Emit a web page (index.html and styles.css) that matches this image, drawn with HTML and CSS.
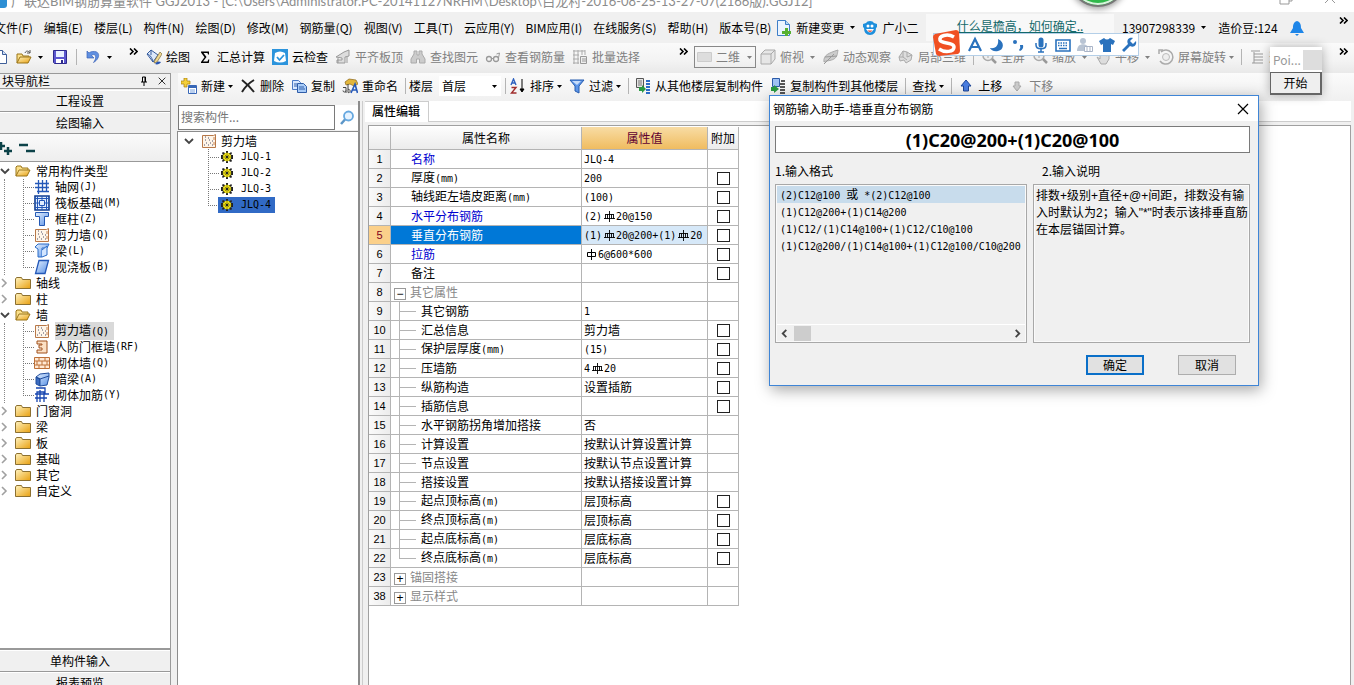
FILE: index.html
```html
<!DOCTYPE html>
<html lang="zh-CN">
<head>
<meta charset="utf-8">
<title>广联达BIM钢筋算量软件 GGJ2013</title>
<link rel="stylesheet" href="styles.css">
</head>
<body>
<svg class="defs" aria-hidden="true">
  <defs>
    <linearGradient id="gold" x1="0" y1="0" x2="1" y2="1"><stop offset="0" stop-color="#fff3c0"/><stop offset="1" stop-color="#e8a010"/></linearGradient>
    <linearGradient id="sky" x1="0" y1="0" x2="1" y2="1"><stop offset="0" stop-color="#e4f0ff"/><stop offset="1" stop-color="#5a92e6"/></linearGradient>
  </defs>
  <symbol id="arrow" viewBox="0 0 5 3"><path d="M0 0h5L2.500 3z" fill="currentColor"/></symbol>
  <symbol id="more" viewBox="0 0 9 7"><path d="M1 0.500l3 3-3 3M5 0.500l3 3-3 3" fill="none" stroke="#000" stroke-width="1.600"/></symbol>
  <symbol id="open" viewBox="0 0 16 16"><path d="M1 13V4l1-1h4l1 2h6v3" fill="#fbe08a" stroke="#9a7418"/><path d="M1 13l3-6h11l-3 6z" fill="url(#gold)" stroke="#9a7418"/></symbol>
  <symbol id="openbig" viewBox="0 0 16 16"><path d="M1 14V5h5l1 2h6v3" fill="#fbe08a" stroke="#9a7418"/><path d="M1 14l3-6h11l-3 6z" fill="url(#gold)" stroke="#9a7418"/><path d="M9 4c1-3 4-2 5 0M14 1v3h-3" fill="none" stroke="#555"/></symbol>
  <symbol id="folder" viewBox="0 0 16 16"><path d="M.5 13.500V4l1-1.500h5l1 2h8v9z" fill="url(#gold)" stroke="#8c7030"/></symbol>
  <symbol id="doc" viewBox="0 0 16 16"><path d="M2.500 1.500h8l4 4v9h-12z" fill="#fff" stroke="#3f5f99"/><path d="M10.500 1.500v4h4" fill="#cfe0f8" stroke="#3f5f99"/></symbol>
  <symbol id="save" viewBox="0 0 16 16"><path d="M1.500 1.500h13v13h-12l-1-1z" fill="#5b57cf" stroke="#2e2a8c"/><path d="M4 2h8v6H4z" fill="#e8f0ff"/><path d="M4 10h8v4H4z" fill="#fff"/><path d="M9 11h2v3H9z" fill="#2e2a8c"/></symbol>
  <symbol id="undo" viewBox="0 0 16 16"><path d="M2 2v7h7L6.500 6.500c4-3 6 2 2 7 7-4 7-12-1-11-2 .3-3 1-3.500 1.500z" fill="#5f8fe0" stroke="#3a62b8" stroke-width=".7"/></symbol>
  <symbol id="paint" viewBox="0 0 16 16"><path d="M1 5l4-4 7 5-5 7z" fill="#dce8fa" stroke="#345a9c"/><path d="M1 5c2 0 5 3 6 8M5 1v5" fill="none" stroke="#345a9c"/><path d="M14 3l-5 8-1 3 3-1 5-8z" fill="#f0d890" stroke="#7b6a3a" stroke-width=".7"/><path d="M9 15c2-3 4-3 6-2-1 2-4 3-6 2z" fill="#2855b0"/></symbol>
  <symbol id="sigma" viewBox="0 0 16 16"><path d="M4 2.500h8v3h-1l-.5-1.500H6.500L9.500 8l-3.500 4.500h4.500l.8-2h1l-.5 3.500H4v-1L7.500 8.200 4 3.500z" fill="#000"/></symbol>
  <symbol id="check" viewBox="0 0 16 16"><path d="M0 0h16v16H0z" fill="#2c94dc"/><path d="M3 4q5-3 10 0l1 8q-6 3-12 0z" fill="#fff"/><path d="M5 8l2.500 3L12 6" fill="none" stroke="#2c94dc" stroke-width="1.800"/></symbol>
  <symbol id="slab" viewBox="0 0 16 16"><path d="M1 8l8-5 5-2v6l-4 1v6H2v-3h5V9z" fill="#ddd" stroke="#999"/><path d="M3 9v5M12 8v6" stroke="#999"/></symbol>
  <symbol id="binoc" viewBox="0 0 16 16"><path d="M4 2h3v4h2V2h3v3l3 5v4H9.500v-4h-3v4H1v-4l3-5z" fill="#ccc" stroke="#aaa"/></symbol>
  <symbol id="glasses" viewBox="0 0 16 16"><circle cx="4" cy="10" r="2.500" fill="none" stroke="#999" stroke-width="1.300"/><circle cx="11" cy="10" r="2.500" fill="none" stroke="#999" stroke-width="1.300"/><path d="M6.500 9.500h2M13.500 9l1-5-3 1" fill="none" stroke="#999"/></symbol>
  <symbol id="batch" viewBox="0 0 16 16"><path d="M1 2h12M1 6h6M1 10h6M1 14h6M2 1v14M6 1v14M10 1v5M13 1v5" stroke="#aaa"/><path d="M8.500 7.500h6v7h-6zM10 10h4M10 12h4" fill="#eee" stroke="#999"/></symbol>
  <symbol id="rect" viewBox="0 0 16 16"><path d="M.5 3.500h14v9H.5z" fill="#ddd" stroke="#ccc"/></symbol>
  <symbol id="cube" viewBox="0 0 16 16"><path d="M1 5l4-4h10v9l-4 5H1z" fill="#e6e6e6" stroke="#aaa"/><path d="M1 5h10v10M11 5l4-4" fill="none" stroke="#aaa"/></symbol>
  <symbol id="leaf" viewBox="0 0 16 16"><path d="M1 13C0 6 6 4 15 1c-1 5 0 10-12 11z" fill="#ccc" stroke="#aaa"/><path d="M1 15L11 5M2 8l12-1" stroke="#999"/></symbol>
  <symbol id="blocks" viewBox="0 0 16 16"><path d="M1 8l4-6 4 1 5 3-1 5-5 3-2-3-4 1z" fill="#ddd" stroke="#aaa"/><path d="M5 2v6l4 3M9 3v5l5-2M1 8l4 0" fill="none" stroke="#aaa"/></symbol>
  <symbol id="mag" viewBox="0 0 16 16"><circle cx="7" cy="6.500" r="5" fill="#eee" stroke="#aaa" stroke-width="1.500"/><path d="M11 10l4 4" stroke="#999" stroke-width="2.500"/><path d="M7 4v5M4.500 6.500h5" stroke="#aaa"/></symbol>
  <symbol id="hand" viewBox="0 0 16 16"><path d="M2 8l3 2V4l2-1 1 4 1-5h2v5l3-2v5l-3 5H6z" fill="#ddd" stroke="#aaa"/></symbol>
  <symbol id="rotate" viewBox="0 0 16 16"><path d="M1 5V1h4M3 3a7 7 0 1 1-1 9" fill="none" stroke="#aaa" stroke-width="1.500"/><circle cx="8" cy="8" r="3.500" fill="#eee" stroke="#bbb"/></symbol>
  <symbol id="list" viewBox="0 0 16 16"><path d="M2 2h9M5 5h9M5 8h9M5 11h9M3 14h11M5 3v11" stroke="#999"/></symbol>
  <symbol id="new" viewBox="0 0 16 16"><path d="M3 0h3v3h3v3H6v3H3V6H0V3h3z" fill="#f4cf3a" stroke="#a67c0c" stroke-width=".7"/><path d="M7.500 7.500h8v8h-8z" fill="#fff" stroke="#3867b7"/><path d="M8 8h7v2H8z" fill="#3867b7"/><path d="M9 12h5M9 14h5" stroke="#79a2df"/></symbol>
  <symbol id="del" viewBox="0 0 16 16"><path d="M2 2c4 3 8 7 12 12M14 2C9 5 5 9 2 14" fill="none" stroke="#222" stroke-width="2"/></symbol>
  <symbol id="copy" viewBox="0 0 16 16"><path d="M1.500 2.500h6l2 2v7h-8z" fill="#d8e8ff" stroke="#4b79c4"/><path d="M6.500 5.500h6l3 3v6h-9z" fill="#a9ccf8" stroke="#2f5da8"/><path d="M8 9h5M8 11h6M3 6h3M3 8h3" stroke="#2f5da8"/></symbol>
  <symbol id="rename" viewBox="0 0 16 16"><path d="M3 4l4-3 7 1 2 4-4 2-4-2-4 1z" fill="#e2b63b" stroke="#8a651a" stroke-width=".7"/><path d="M1 12.500a1.500 1.500 0 1 0 3 0M4 9.500V15M1 9.500h3" fill="none" stroke="#444"/><path d="M6 6v8.500M6 11.500a1.600 1.600 0 1 1 0 3" fill="none" stroke="#444"/><path d="M9 15l4-9 2.500 9M10 12h5" fill="none" stroke="#2458b8" stroke-width="1.600"/></symbol>
  <symbol id="sort" viewBox="0 0 16 16"><path d="M1 7l2.500-6L6 7M2 5h3" fill="none" stroke="#2f62c0" stroke-width="1.400"/><path d="M1.500 9.500h4.500l-4.500 5.500h5" fill="none" stroke="#a02c2c" stroke-width="1.400"/><path d="M12 1v12M10 11l2 3 2-3z" fill="#000" stroke="#000"/></symbol>
  <symbol id="filter" viewBox="0 0 16 16"><path d="M1 2h14l-5 6v7l-4-2V8z" fill="#5c95e8" stroke="#275cae"/><path d="M3 3h9L8 7z" fill="#c6dcfa"/></symbol>
  <symbol id="copyfrom" viewBox="0 0 16 16"><path d="M1.500.5h7v9h-7z" fill="#e4e4e4" stroke="#555"/><path d="M3 3h4M3 5h4M3 7h4" stroke="#777"/><path d="M4 9h3V7l4 4-4 4v-2H4z" fill="#2a9a42"/><path d="M11 3h4M11 6h4M11 9h4M11 12h4M11 15h4" stroke="#2b6cc6" stroke-width="1.800"/></symbol>
  <symbol id="copyto" viewBox="0 0 16 16"><path d="M2.500.5h7v8h-7z" fill="#9fc2f4" stroke="#2b5aa8"/><path d="M1 9h3V7l5 4-5 4v-2H1z" fill="#2a9a42"/><path d="M11 3h4M10 6h5M10 9h5M10 12h5M10 15h5" stroke="#555" stroke-width="1.800"/></symbol>
  <symbol id="up" viewBox="0 0 16 16"><path d="M8 2l5 6h-2.500v5h-5V8H3z" fill="#4a7de0" stroke="#1d4698"/></symbol>
  <symbol id="down" viewBox="0 0 16 16"><path d="M8 13l4-5h-2V4H6v4H4z" fill="#ccc" stroke="#aaa"/></symbol>
  <symbol id="change" viewBox="0 0 16 16"><path d="M1.500.5h8l4 4v11h-12z" fill="#eaf4ff" stroke="#3d7ec8"/><path d="M9.500.5v4h4" fill="#b8d8f4" stroke="#3d7ec8"/><path d="M9 8h3v3h3v3h-3v2H9v-2H6v-3h3z" fill="#56b030"/></symbol>
  <symbol id="mascot" viewBox="0 0 16 16"><path d="M8 1q3 0 4 2l3 1v3l-1 1q0 7-6 7T2 8L1 7V4l3-1q1-2 4-2z" fill="#1d8fdc"/><path d="M4 9q4 7 8 0z" fill="#fff"/><path d="M5.500 10.500q2.500 3 5 0z" fill="#e8543c"/><circle cx="6" cy="6" r="1.500" fill="#fff"/><circle cx="10" cy="6" r="1.500" fill="#fff"/></symbol>
  <symbol id="bell" viewBox="0 0 16 16"><path d="M8 1c4 1 4 5 4 7l3 5H1l3-5c0-2 0-6 4-7z" fill="#1f86e8"/><path d="M6 14h4l-2 2z" fill="#1f86e8"/></symbol>
  <symbol id="search" viewBox="0 0 16 16"><circle cx="9.500" cy="6" r="4.500" fill="#e6f3ff" stroke="#66a8e0" stroke-width="1.800"/><path d="M6 9.500L2 14" stroke="#5c96c8" stroke-width="2.500"/></symbol>
  <symbol id="opened" viewBox="0 0 10 10"><path d="M1 3l4 4 4-4" fill="none" stroke="#444" stroke-width="1.800"/></symbol>
  <symbol id="closed" viewBox="0 0 10 10"><path d="M2 1l4 4-4 4" fill="none" stroke="#a0a0a0" stroke-width="1.600"/></symbol>
  <symbol id="tee" viewBox="0 0 12 16"><path d="M.5 0v16M2 8.500h10" stroke="#777" stroke-dasharray="1 1"/></symbol>
  <symbol id="ell" viewBox="0 0 12 16"><path d="M.5 0v8M0 8.500h12" stroke="#777" stroke-dasharray="1 1"/></symbol>
  <symbol id="grid" viewBox="0 0 16 16"><path d="M4.500 1v14M8.500 1v12M12.500 1v12M1 4.500h12M1 8.500h12M3 12.500h12" stroke="#2458b8" stroke-width="1.300"/><circle cx="14" cy="4.500" r="1" fill="#2458b8"/><circle cx="14" cy="8.500" r="1" fill="#2458b8"/></symbol>
  <symbol id="raft" viewBox="0 0 16 16"><path d="M1 1h14v14H1z" fill="#e2eeff" stroke="#103c90" stroke-width="1.600"/><path d="M5.500 5.500h5v5h-5zM3.500 1v14M12.500 1v14M1 3.500h14M1 12.500h14M8 1v4M8 11v4M1 8h4M11 8h4" fill="none" stroke="#2458b8"/></symbol>
  <symbol id="column" viewBox="0 0 16 16"><path d="M1.500 1.500h13v4h-4v9h-5v-9h-4z" fill="url(#sky)" stroke="#2358b4"/></symbol>
  <symbol id="wall" viewBox="0 0 16 16"><path d="M1.500 2.500h11l2-1v13h-13z" fill="#fff5e8" stroke="#b87848"/><path d="M3 12h1M5 10h1M7 12h1M9 10h1M4 7h1M8 7h1M11 12h1M11 8h1M4 4h1M7 5h1" stroke="#4a4c68"/><path d="M13 4v3M13 9v3" stroke="#c98450"/></symbol>
  <symbol id="beam" viewBox="0 0 16 16"><path d="M1 4l3-3h11l-2 4H8v9H4V6z" fill="url(#sky)" stroke="#2a6cc8"/><path d="M8 7l5-4v9l-5 2" fill="#d2e5ff" stroke="#2a6cc8"/></symbol>
  <symbol id="plate" viewBox="0 0 16 16"><path d="M5 1.500h9.500L11 14.500H1.500z" fill="url(#sky)" stroke="#2458b8" stroke-width="1.300"/></symbol>
  <symbol id="frame" viewBox="0 0 16 16"><path d="M3 2h10v12H3v-3h5V9H5V6h3V5H3z" fill="#fbe0c4" stroke="#a0501c"/></symbol>
  <symbol id="brick" viewBox="0 0 16 16"><path d="M.5 2.500h15v11H.5zM.5 6h15M.5 10h15M5 2.500V6M11 2.500V6M8 6v4M3 6v4M13 6v4M5 10v3.500M11 10v3.500" fill="#ffe9d4" stroke="#bd7038"/></symbol>
  <symbol id="hidden" viewBox="0 0 16 16"><path d="M2 6l4 2v7l-4-2z" fill="#3c6cc0" stroke="#1f4c9c"/><path d="M2 6l4-3 9-1v4l-2 8-7 1V8z" fill="url(#sky)" stroke="#1f4c9c"/><path d="M2 6l4 2 9-3" fill="none" stroke="#1f4c9c"/></symbol>
  <symbol id="rebarwall" viewBox="0 0 16 16"><path d="M2 1h9v6h4M1 7h14M3 15V5h7v10M6 3v12M1 11h12" fill="none" stroke="#1746b0" stroke-width="1.300"/></symbol>
  <symbol id="gear" viewBox="0 0 12 12"><path d="M5 0h2v2h2l1-1 1 1-1 2h2v4h-2l1 2-1 1-2-1H7v2H5v-2H3l-1 1-1-1 1-2H0V4h2L1 2l1-1 2 1h1z" fill="#222"/><circle cx="6" cy="6" r="4.200" fill="#f2e51c"/><path d="M6 2v8M2 6h8M3.500 3.500l5 5M8.500 3.500l-5 5" stroke="#776f00" stroke-width=".7"/><circle cx="6" cy="6" r="1.200" fill="#222"/></symbol>
  <symbol id="rebar3" viewBox="0 0 11 11"><path d="M5.500 0v11M1.500 3v5M9.500 3v5M1.500 3.500h8M0 7.500h11M3.500 3v5M7.500 3v5" fill="none" stroke="#000" stroke-width=".9"/></symbol>
  <symbol id="rebar1" viewBox="0 0 11 11"><path d="M5.500 0v11M1.500 3.500h8v4h-8z" fill="none" stroke="#000"/></symbol>
  <symbol id="x" viewBox="0 0 12 12"><path d="M1 1l10 10M11 1L1 11" stroke="currentColor" stroke-width="1.200"/></symbol>
</svg>

<div class="app">
  <header class="titlebar">
    <span class="app-icon"></span>
    <span class="app-title">广联达BIM钢筋算量软件 GGJ2013 - [C:\Users\Administrator.PC-20141127NRHM\Desktop\白龙村-2016-08-25-13-27-07(2166版).GGJ12]</span>
    <svg class="win-buttons" viewBox="0 0 60 12"><path d="M3 2h7v9H1V2zM5 0h8v8h-3M46 0l10 10M56 0L46 10" fill="none" stroke="#999"/></svg>
  </header>

  <nav class="menubar">
    <div class="menus">
      <button>文件(F)</button><button>编辑(E)</button><button>楼层(L)</button><button>构件(N)</button><button>绘图(D)</button><button>修改(M)</button><button>钢筋量(Q)</button><button>视图(V)</button><button>工具(T)</button><button>云应用(Y)</button><button>BIM应用(I)</button><button>在线服务(S)</button><button>帮助(H)</button><button>版本号(B)</button>
      <div class="extras">
        <button><svg class="i"><use href="#change"/></svg>新建变更<svg class="arr wide"><use href="#arrow"/></svg></button>
        <button><svg class="i"><use href="#mascot"/></svg>广小二</button>
      </div>
    </div>
    <div class="tip"><a href="#faq">什么是檐高，如何确定..</a></div>
    <div class="account"><button>13907298339<svg class="arr wide"><use href="#arrow"/></svg></button><span>造价豆:124</span><svg class="i"><use href="#bell"/></svg></div>
    <svg class="more"><use href="#more"/></svg>
  </nav>

  <div class="toolbars">
    <div class="bar bar-file">
      <button aria-label="新建"><svg class="i"><use href="#doc"/></svg></button>
      <button aria-label="打开"><svg class="i"><use href="#openbig"/></svg><svg class="arr wide"><use href="#arrow"/></svg></button>
      <button aria-label="保存"><svg class="i"><use href="#save"/></svg></button>
      <i class="sep"></i>
      <button aria-label="撤销"><svg class="i"><use href="#undo"/></svg><svg class="arr wide"><use href="#arrow"/></svg></button>
      <svg class="more"><use href="#more"/></svg>
    </div>
    <div class="bar bar-main">
      <button><svg class="i"><use href="#paint"/></svg>绘图</button>
      <button><svg class="i"><use href="#sigma"/></svg>汇总计算</button>
      <button><svg class="i"><use href="#check"/></svg>云检查</button>
      <button disabled><svg class="i"><use href="#slab"/></svg>平齐板顶</button>
      <button disabled><svg class="i"><use href="#binoc"/></svg>查找图元</button>
      <button disabled><svg class="i"><use href="#glasses"/></svg>查看钢筋量</button>
      <button disabled><svg class="i"><use href="#batch"/></svg>批量选择</button>
      <svg class="more"><use href="#more"/></svg>
    </div>
    <div class="bar bar-view">
      <label class="combo view-combo"><svg class="i"><use href="#rect"/></svg><select aria-label="视图模式" disabled><option>二维</option></select><svg class="arr"><use href="#arrow"/></svg></label>
      <button disabled><svg class="i"><use href="#cube"/></svg>俯视<svg class="arr wide"><use href="#arrow"/></svg></button>
      <button disabled><svg class="i"><use href="#leaf"/></svg>动态观察</button>
      <button disabled><svg class="i"><use href="#blocks"/></svg>局部三维</button>
      <i class="sep"></i>
      <button disabled><svg class="i"><use href="#mag"/></svg>全屏</button>
      <button disabled><svg class="i"><use href="#mag"/></svg>缩放<svg class="arr wide"><use href="#arrow"/></svg></button>
      <button disabled><svg class="i"><use href="#hand"/></svg>平移<svg class="arr wide"><use href="#arrow"/></svg></button>
      <button disabled><svg class="i"><use href="#rotate"/></svg>屏幕旋转<svg class="arr"><use href="#arrow"/></svg></button>
      <i class="sep"></i>
      <button disabled><svg class="i"><use href="#list"/></svg>选择</button>
      <svg class="more"><use href="#more"/></svg>
    </div>
  </div>

  <div class="work">
    <aside class="nav">
      <div class="nav-head"><span>块导航栏</span><svg class="pin" viewBox="0 0 10 10"><path d="M2 6h6M3.500 6V1h3v5M6 1v5M5 6v4" fill="none" stroke="#000"/></svg><svg class="close"><use href="#x"/></svg></div>
      <button class="section">工程设置</button>
      <button class="section">绘图输入</button>
      <div class="nav-tools"><svg viewBox="0 0 36 14"><path d="M1 0v8M-3 4h8M8 5v8M4 9h8" stroke="#0c4248" stroke-width="2.500"/><path d="M19 3h9M26 9h9" stroke="#0c4248" stroke-width="2.500"/></svg></div>
      <ul class="tree nav-tree">
        <li><div class="row"><svg class="tw"><use href="#opened"/></svg><svg class="i"><use href="#open"/></svg>常用构件类型</div>
          <ul>
            <li class="row"><svg class="stem"><use href="#tee"/></svg><svg class="i"><use href="#grid"/></svg>轴网<code>(J)</code></li>
            <li class="row"><svg class="stem"><use href="#tee"/></svg><svg class="i"><use href="#raft"/></svg>筏板基础<code>(M)</code></li>
            <li class="row"><svg class="stem"><use href="#tee"/></svg><svg class="i"><use href="#column"/></svg>框柱<code>(Z)</code></li>
            <li class="row"><svg class="stem"><use href="#tee"/></svg><svg class="i"><use href="#wall"/></svg>剪力墙<code>(Q)</code></li>
            <li class="row"><svg class="stem"><use href="#tee"/></svg><svg class="i"><use href="#beam"/></svg>梁<code>(L)</code></li>
            <li class="row"><svg class="stem"><use href="#ell"/></svg><svg class="i"><use href="#plate"/></svg>现浇板<code>(B)</code></li>
          </ul></li>
        <li class="row"><svg class="tw"><use href="#closed"/></svg><svg class="i"><use href="#folder"/></svg>轴线</li>
        <li class="row"><svg class="tw"><use href="#closed"/></svg><svg class="i"><use href="#folder"/></svg>柱</li>
        <li><div class="row"><svg class="tw"><use href="#opened"/></svg><svg class="i"><use href="#open"/></svg>墙</div>
          <ul>
            <li class="row"><svg class="stem"><use href="#tee"/></svg><svg class="i"><use href="#wall"/></svg><span class="current">剪力墙<code>(Q)</code></span></li>
            <li class="row"><svg class="stem"><use href="#tee"/></svg><svg class="i"><use href="#frame"/></svg>人防门框墙<code>(RF)</code></li>
            <li class="row"><svg class="stem"><use href="#tee"/></svg><svg class="i"><use href="#brick"/></svg>砌体墙<code>(Q)</code></li>
            <li class="row"><svg class="stem"><use href="#tee"/></svg><svg class="i"><use href="#hidden"/></svg>暗梁<code>(A)</code></li>
            <li class="row"><svg class="stem"><use href="#ell"/></svg><svg class="i"><use href="#rebarwall"/></svg>砌体加筋<code>(Y)</code></li>
          </ul></li>
        <li class="row"><svg class="tw"><use href="#closed"/></svg><svg class="i"><use href="#folder"/></svg>门窗洞</li>
        <li class="row"><svg class="tw"><use href="#closed"/></svg><svg class="i"><use href="#folder"/></svg>梁</li>
        <li class="row"><svg class="tw"><use href="#closed"/></svg><svg class="i"><use href="#folder"/></svg>板</li>
        <li class="row"><svg class="tw"><use href="#closed"/></svg><svg class="i"><use href="#folder"/></svg>基础</li>
        <li class="row"><svg class="tw"><use href="#closed"/></svg><svg class="i"><use href="#folder"/></svg>其它</li>
        <li class="row"><svg class="tw"><use href="#closed"/></svg><svg class="i"><use href="#folder"/></svg>自定义</li>
      </ul>
      <button class="section">单构件输入</button>
      <button class="section">报表预览</button>
    </aside>

    <main class="main">
      <div class="bar bar-edit">
        <button><svg class="i"><use href="#new"/></svg>新建<svg class="arr"><use href="#arrow"/></svg></button>
        <button><svg class="i"><use href="#del"/></svg>删除</button>
        <button><svg class="i"><use href="#copy"/></svg>复制</button>
        <button><svg class="i"><use href="#rename"/></svg>重命名</button>
        <label class="floor"><i class="sep"></i>楼层<span class="combo floor-combo"><select><option>首层</option></select><svg class="arr"><use href="#arrow"/></svg></span><i class="sep"></i></label>
        <button><svg class="i"><use href="#sort"/></svg>排序<svg class="arr"><use href="#arrow"/></svg></button>
        <button><svg class="i"><use href="#filter"/></svg>过滤<svg class="arr"><use href="#arrow"/></svg></button>
        <i class="sep"></i>
        <button><svg class="i"><use href="#copyfrom"/></svg>从其他楼层复制构件</button>
        <button><svg class="i"><use href="#copyto"/></svg>复制构件到其他楼层</button>
        <i class="sep"></i>
        <button>查找<svg class="arr"><use href="#arrow"/></svg></button>
        <i class="sep"></i>
        <button><svg class="i"><use href="#up"/></svg>上移</button>
        <button disabled><svg class="i"><use href="#down"/></svg>下移</button>
      </div>

      <div class="panes">
        <section class="parts">
          <div class="find"><input type="text" placeholder="搜索构件..." aria-label="搜索构件"><button aria-label="搜索"><svg class="i"><use href="#search"/></svg></button></div>
          <ul class="tree part-tree">
            <li><div class="row"><svg class="tw"><use href="#opened"/></svg><svg class="i"><use href="#wall"/></svg>剪力墙</div>
              <ul>
                <li class="row"><svg class="stem"><use href="#tee"/></svg><span class="part"><svg class="g"><use href="#gear"/></svg><code>JLQ-1</code></span></li>
                <li class="row"><svg class="stem"><use href="#tee"/></svg><span class="part"><svg class="g"><use href="#gear"/></svg><code>JLQ-2</code></span></li>
                <li class="row"><svg class="stem"><use href="#tee"/></svg><span class="part"><svg class="g"><use href="#gear"/></svg><code>JLQ-3</code></span></li>
                <li class="row"><svg class="stem"><use href="#ell"/></svg><span class="part selected"><svg class="g"><use href="#gear"/></svg><code>JLQ-4</code></span></li>
              </ul></li>
          </ul>
        </section>

        <section class="editor">
          <div class="tabs"><button class="tab">属性编辑</button></div>
          <div class="sheet">
            <table class="props">
              <thead><tr><th class="n"></th><th class="k">属性名称</th><th class="v">属性值</th><th class="a">附加</th></tr></thead>
              <tbody>
                <tr><th>1</th><td class="blue">名称</td><td><code>JLQ-4</code></td><td></td></tr>
                <tr><th>2</th><td>厚度<code>(mm)</code></td><td><code>200</code></td><td><input type="checkbox" aria-label="附加 厚度"></td></tr>
                <tr><th>3</th><td>轴线距左墙皮距离<code>(mm)</code></td><td><code>(100)</code></td><td><input type="checkbox" aria-label="附加 轴线距左墙皮距离"></td></tr>
                <tr><th>4</th><td class="blue">水平分布钢筋</td><td><code>(2)<svg class="bar-mark"><use href="#rebar3"/></svg>20@150</code></td><td><input type="checkbox" aria-label="附加 水平分布钢筋"></td></tr>
                <tr class="active"><th>5</th><td>垂直分布钢筋</td><td><code>(1)<svg class="bar-mark"><use href="#rebar3"/></svg>20@200+(1)<svg class="bar-mark"><use href="#rebar3"/></svg>20</code></td><td><input type="checkbox" aria-label="附加 垂直分布钢筋"></td></tr>
                <tr><th>6</th><td class="blue">拉筋</td><td><code><svg class="bar-mark"><use href="#rebar1"/></svg>6@600*600</code></td><td><input type="checkbox" aria-label="附加 拉筋"></td></tr>
                <tr><th>7</th><td>备注</td><td></td><td><input type="checkbox" aria-label="附加 备注"></td></tr>
                <tr class="group"><th>8</th><td><button class="fold" aria-label="收起">−</button>其它属性</td><td></td><td></td></tr>
                <tr class="sub"><th>9</th><td>其它钢筋</td><td><code>1</code></td><td></td></tr>
                <tr class="sub"><th>10</th><td>汇总信息</td><td>剪力墙</td><td><input type="checkbox" aria-label="附加 汇总信息"></td></tr>
                <tr class="sub"><th>11</th><td>保护层厚度<code>(mm)</code></td><td><code>(15)</code></td><td><input type="checkbox" aria-label="附加 保护层厚度"></td></tr>
                <tr class="sub"><th>12</th><td>压墙筋</td><td><code>4<svg class="bar-mark"><use href="#rebar3"/></svg>20</code></td><td><input type="checkbox" aria-label="附加 压墙筋"></td></tr>
                <tr class="sub"><th>13</th><td>纵筋构造</td><td>设置插筋</td><td><input type="checkbox" aria-label="附加 纵筋构造"></td></tr>
                <tr class="sub"><th>14</th><td>插筋信息</td><td></td><td><input type="checkbox" aria-label="附加 插筋信息"></td></tr>
                <tr class="sub"><th>15</th><td>水平钢筋拐角增加搭接</td><td>否</td><td></td></tr>
                <tr class="sub"><th>16</th><td>计算设置</td><td>按默认计算设置计算</td><td></td></tr>
                <tr class="sub"><th>17</th><td>节点设置</td><td>按默认节点设置计算</td><td></td></tr>
                <tr class="sub"><th>18</th><td>搭接设置</td><td>按默认搭接设置计算</td><td></td></tr>
                <tr class="sub"><th>19</th><td>起点顶标高<code>(m)</code></td><td>层顶标高</td><td><input type="checkbox" aria-label="附加 起点顶标高"></td></tr>
                <tr class="sub"><th>20</th><td>终点顶标高<code>(m)</code></td><td>层顶标高</td><td><input type="checkbox" aria-label="附加 终点顶标高"></td></tr>
                <tr class="sub"><th>21</th><td>起点底标高<code>(m)</code></td><td>层底标高</td><td><input type="checkbox" aria-label="附加 起点底标高"></td></tr>
                <tr class="sub last"><th>22</th><td>终点底标高<code>(m)</code></td><td>层底标高</td><td><input type="checkbox" aria-label="附加 终点底标高"></td></tr>
                <tr class="group"><th>23</th><td><button class="fold" aria-label="展开">+</button>锚固搭接</td><td></td><td></td></tr>
                <tr class="group"><th>38</th><td><button class="fold" aria-label="展开">+</button>显示样式</td><td></td><td></td></tr>
              </tbody>
            </table>
          </div>
        </section>
      </div>
    </main>
  </div>
</div>

<section class="dialog" role="dialog" aria-labelledby="dlg-title">
  <header class="dialog-head"><span id="dlg-title">钢筋输入助手-墙垂直分布钢筋</span><button aria-label="关闭"><svg><use href="#x"/></svg></button></header>
  <div class="dialog-body">
    <input class="formula" type="text" value="(1)C20@200+(1)C20@100" aria-label="钢筋信息">
    <div class="columns">
      <div class="col-format">
        <h2>1.输入格式</h2>
        <div class="box formats">
          <ul><li class="picked"><code>(2)C12@100 </code>或<code> *(2)C12@100</code></li><li><code>(1)C12@200+(1)C14@200</code></li><li><code>(1)C12/(1)C14@100+(1)C12/C10@100</code></li><li><code>(1)C12@200/(1)C14@100+(1)C12@100/C10@200</code></li></ul>
          <div class="scroll"><svg viewBox="0 0 10 10"><path d="M7 1L3 5l4 4" fill="none" stroke="#444" stroke-width="2"/></svg><i></i><svg viewBox="0 0 10 10"><path d="M3 1l4 4-4 4" fill="none" stroke="#444" stroke-width="2"/></svg></div>
        </div>
      </div>
      <div class="col-help">
        <h2>2.输入说明</h2>
        <p class="box">排数+级别+直径+@+间距，排数没有输入时默认为2；输入"*"时表示该排垂直筋在本层锚固计算。</p>
      </div>
    </div>
    <div class="actions"><button class="primary">确定</button><button>取消</button></div>
  </div>
</section>

<div class="ime">
  <svg class="ime-logo" viewBox="0 0 28 28"><path d="M2 5l21-4q2 0 3 2l1 19q0 2-2 3L6 27q-2 0-3-2L0 8q0-2 2-3z" fill="#f05023"/><path d="M21 8C14 4 6 7 7 11s14 2 14 7-9 6-15 2" fill="none" stroke="#fff" stroke-width="3.500"/></svg>
  <svg viewBox="0 0 16 16"><path d="M2 14L8 2l6 12M4 10h8" fill="none" stroke="#2a72bd" stroke-width="2.200"/></svg>
  <svg viewBox="0 0 16 16"><path d="M9 2c7 3 6 11 0 12-4 1-7-1-8-3 6 1 9-3 8-9z" fill="#2a72bd"/></svg>
  <svg viewBox="0 0 16 16"><circle cx="4" cy="5" r="2" fill="#2a72bd"/><path d="M9 8h3q1 4-3 6l-1-1q2-2 1-5z" fill="#2a72bd"/></svg>
  <svg viewBox="0 0 16 16"><path d="M5.500 3a2.500 2.500 0 0 1 5 0v5a2.500 2.500 0 0 1-5 0z" fill="#2a72bd"/><path d="M3 6v2c0 5 10 5 10 0V6M8 12v3M5 15h6" fill="none" stroke="#2a72bd" stroke-width="1.500"/></svg>
  <svg viewBox="0 0 16 16"><path d="M1 3h14v11H1z" fill="none" stroke="#2a72bd" stroke-width="1.600"/><path d="M3 6h10M3 8.500h10" stroke="#2a72bd" stroke-width="1.500" stroke-dasharray="1.500 1"/><path d="M4 11.500h8" stroke="#2a72bd" stroke-width="1.500"/></svg>
  <svg viewBox="0 0 16 16"><circle cx="6" cy="4" r="3" fill="#b8c4d4"/><path d="M0 14c0-9 11-8 12-2v2z" fill="#b8c4d4"/><path d="M7.500 9.500h8v5h-8zM10 10v4M13 10v4" fill="#fff" stroke="#a8b4c8"/></svg>
  <svg viewBox="0 0 16 16"><path d="M5 1q3 3 6 0l5 3-2 4-2-1v8H4V7L2 8 0 4z" fill="#2a72bd"/></svg>
  <svg viewBox="0 0 16 16"><path d="M15 4l-3 3-3-3 3-3c-4-1-7 2-5 6l-6 6 2 2 6-6c4 2 7-1 6-5z" fill="#2a72bd"/></svg>
</div>

<div class="poi"><div class="poi-head"><span>Poi...</span><i></i></div><button>开始</button></div>
<div class="ball"></div>
</body>
</html>
```

FILE: styles.css
```css
* { box-sizing: border-box; }
html, body { height: 100%; }
body { margin: 0; overflow: hidden; position: relative; background: #f0f0f0; color: #000; font: 12px/16px "Noto Sans CJK SC", sans-serif; }
button, input, select { font: inherit; color: inherit; margin: 0; padding: 0; border: 0; background: none; }
button { white-space: nowrap; }
ul { list-style: none; margin: 0; padding: 0; }
h2 { font: inherit; margin: 0; }
code { font: 10px/16px "DejaVu Sans Mono", monospace; }
svg { flex: none; display: block; overflow: visible; }
.defs { position: absolute; width: 0; height: 0; }
.i { width: 16px; height: 16px; }
.more { width: 9px; height: 7px; }
.sep { width: 1px; height: 16px; background: #b4b4b4; flex: none; }
.arr { width: 5px; height: 3px; margin-left: -1px; }
.arr.wide { margin: 0 1px 0 2px; }

.app { height: 100%; display: flex; flex-direction: column; overflow: hidden; }
.titlebar { height: 12px; flex: none; background: #fff; display: flex; align-items: flex-end; overflow: hidden; color: #8c8c8c; font: 13px/16px Lato, "Noto Sans CJK SC", sans-serif; }
.titlebar > * { flex: none; }
.app-icon { width: 7px; height: 8px; margin-bottom: 4px; background: #2d8fd4; border-radius: 0 0 3px 0; }
.app-title { margin: 0 auto 3px 4px; white-space: nowrap; }
.win-buttons { width: 60px; height: 12px; margin: 0 15px 7px 0; }

.menubar { height: 31px; flex: none; display: flex; align-items: center; background: #f0f0f0; }
.menus { display: flex; align-items: center; gap: 11px; margin-left: -6px; width: 932px; flex: none; white-space: nowrap; }
.menus button, .account button, .bar button { display: flex; align-items: center; gap: 4px; }
.extras { display: flex; gap: 6px; margin-left: -6px; }
.tip { width: 188px; height: 27px; flex: none; background: #f8f8f8; text-align: center; padding-top: 4px; white-space: nowrap; }
.tip a { color: #13696b; }
.account { display: flex; align-items: center; gap: 11px; padding-left: 8px; flex: 1; white-space: nowrap; }
.menubar > .more { margin: 0 6px 14px 0; }

.toolbars { display: flex; flex: none; height: 30px; }
.bar { display: flex; align-items: center; gap: 7px; padding-bottom: 2px; background: linear-gradient(#fafafa, #f3f3f3 60%, #e9e9e9); white-space: nowrap; }
.bar button:disabled, .view-combo, .view-combo select { color: #808080; opacity: 1; }
.bar .more { margin: 0 4px 12px auto; }
.bar-file { gap: 8px; margin-left: -8px; width: 150px; flex: none; }
.bar-main { width: 550px; padding-left: 4px; flex: none; }
.bar-view { flex: 1; min-width: 0; padding-left: 2px; }
.bar-view .more { margin-right: 6px; }
.combo { display: flex; align-items: center; }
.combo select { appearance: none; flex: 1; min-width: 0; }
.combo .arr { margin: 0 3px 0 0; }
.view-combo { width: 62px; height: 22px; border: 1px solid #888; padding-left: 2px; gap: 3px; margin-right: -3px; }

.work { flex: 1; min-height: 0; display: flex; gap: 7px; }
.nav { width: 171px; flex: none; display: flex; flex-direction: column; border-right: 1px solid #9a9a9a; margin-bottom: -9px; }
.nav-head { height: 16px; flex: none; display: flex; align-items: center; border: 1px solid #999; border-width: 1px 0; padding: 0 4px 0 2px; }
.nav-head span { flex: 1; }
.pin { width: 10px; height: 10px; margin-right: 9px; }
.nav-head .close { width: 8px; height: 8px; }
.section { height: 22px; flex: none; border-top: 1px solid #fff; border-bottom: 1px solid #999; padding-right: 10px; }
.nav-head + .section { margin-top: 1px; }
.nav-tools { height: 28px; flex: none; padding-top: 8px; border-bottom: 1px solid #999; background: linear-gradient(#fafafa, #eee); }
.nav-tools svg { width: 36px; height: 14px; }
.nav-tree { flex: 1; min-height: 0; background: #fff; padding-top: 1px; border-bottom: 2px solid #999; }
.row { display: flex; align-items: center; height: 16px; white-space: nowrap; }
.tw { width: 10px; height: 10px; }
.nav-tree .tw { margin-right: 5px; }
.nav-tree .row .i { margin-right: 5px; }
.nav-tree > li > ul { margin-left: 4px; border-left: 1px dotted #888; padding-left: 18px; }
.stem { width: 12px; height: 16px; }
.nav-tree .stem { margin-right: -1px; }
.current { background: #d9d9d9; padding-right: 5px; }

.main { flex: 1; min-width: 0; display: flex; flex-direction: column; }
.bar-edit { height: 28px; flex: none; padding-left: 3px; background: linear-gradient(#fbfbfb, #f0f0f0); }
.bar-edit > .sep { margin-right: -1px; }
.floor { display: flex; align-items: center; gap: 3px; margin-right: -3px; }
.floor-combo { width: 62px; height: 20px; background: #fff; padding: 0 1px 0 3px; margin: 0 1px 0 3px; }
.panes { flex: 1; min-height: 0; display: flex; gap: 2px; }
.parts { width: 183px; flex: none; display: flex; flex-direction: column; border-right: 2px solid #8c8c8c; margin-left: -1px; }
.find { display: flex; height: 30px; flex: none; padding: 4px 0 1px 1px; }
.find input { flex: 1; min-width: 0; border: 1px solid #7a7a7a; background: #fff; padding: 0 2px 2px; }
.find input::placeholder { color: #777; opacity: 1; }
.find button { width: 23px; background: #fff; padding-left: 4px; }
.part-tree { flex: 1; background: #fff; border: 1px solid #8c8c8c; border-width: 1px 0 0 1px; padding: 1px 0 0 6px; }
.part-tree .tw { margin-right: 7px; }
.part-tree .i { margin-right: 4px; }
.part-tree ul { padding-left: 24px; }
.part-tree .stem { margin-right: -2px; }
.part { display: flex; align-items: center; gap: 8px; padding: 0 4px 0 3px; }
.g { width: 12px; height: 12px; }
.part.selected { background: #316ac5; }

.editor { flex: 1; min-width: 0; display: flex; flex-direction: column; padding-right: 3px; border-left: 1px solid #ccc; }
.tabs { height: 21px; flex: none; margin-left: 2px; background: #fff; border-bottom: 1px solid #ccc; }
.tab { height: 21px; padding: 0 8px 2px 7px; background: #fff; border: 1px solid #ccc; border-width: 1px 1px 0 0; font-weight: 500; }
.sheet { flex: 1; margin: 3px 0 0 5px; background: #fff; border: 1px solid #a0a0a0; border-width: 1px 1px 0; padding-top: 1px; overflow: hidden; }
.props { border-collapse: separate; border-spacing: 0; table-layout: fixed; width: 370px; }
.props th, .props td { height: 19px; padding: 0; border: 1px solid #b4b4b4; border-width: 0 1px 1px 0; font-weight: 400; text-align: left; line-height: 16px; white-space: nowrap; overflow: hidden; }
.props thead th { height: 23px; text-align: center; background: linear-gradient(#fdfdfd, #ececec); }
.props thead .v { background: linear-gradient(#f8dca4, #f0bc60); color: #600030; }
.n { width: 22px; } .k { width: 191px; } .v { width: 126px; } .a { width: 31px; }
.props tbody th { text-align: center; font: 11px/16px "Liberation Sans", sans-serif; background: linear-gradient(90deg, #fafafa, #ececec); }
.props td:nth-child(2) { padding-left: 20px; }
.props td:nth-child(3) { padding-left: 2px; }
.props td:nth-child(4) { text-align: center; }
.props .blue { color: #0000d0; }
.props .active th { background: #fbd08a; color: #800020; }
.props .active td:nth-child(2) { background: #0078d7; color: #fff; }
.props .active td:nth-child(3) { background: #d6e8f8; }
.props .group td { color: #888; }
.props .group td:nth-child(2) { padding-left: 3px; }
.props .sub td:nth-child(2) { padding-left: 30px; background: linear-gradient(#b4b4b4, #b4b4b4) 8px 0 / 1px 100% no-repeat, linear-gradient(#b4b4b4, #b4b4b4) 8px 9px / 17px 1px no-repeat; }
.props .last td:nth-child(2) { background-size: 1px 9px, 17px 1px; }
.fold { width: 12px; height: 12px; border: 1px solid #999; background: #fff; color: #000; font: 12px/10px "Liberation Sans", sans-serif; margin-right: 4px; vertical-align: -1px; }
.props input { appearance: none; display: block; width: 13px; height: 13px; border: 1px solid #222; background: #fff; margin: 0 auto; }
.bar-mark { display: inline-block; width: 11px; height: 11px; margin: 0 1px 0 2px; vertical-align: -2px; }

.dialog { position: absolute; left: 769px; top: 95px; width: 490px; background: #f0f0f0; border: 1px solid #3f85d6; box-shadow: 2px 4px 14px rgba(0, 0, 0, .35); }
.dialog-head { height: 25px; display: flex; align-items: center; justify-content: space-between; background: #fff; padding: 0 9px 0 3px; }
.dialog-head svg { width: 12px; height: 12px; }
.dialog-body { padding: 5px 8px 10px 5px; }
.formula { display: block; width: 100%; height: 27px; border: 1px solid #7a7a7a; background: #fff; text-align: center; font: bold 18px/22px "Noto Sans", sans-serif; }
.columns { display: flex; gap: 6px; padding-top: 10px; }
.col-format { width: 252px; flex: none; }
.col-help { flex: 1; }
.columns h2 { height: 21px; }
.col-help h2 { padding-left: 9px; }
.box { height: 159px; margin: 0; border: 1px solid #a8a8a8; outline: 1px solid #fafafa; outline-offset: -2px; }
.formats { display: flex; flex-direction: column; justify-content: space-between; padding: 1px; }
.formats li { height: 17px; padding-left: 3px; white-space: pre; line-height: 16px; }
.picked { background: #c8dcec; }
.scroll { height: 17px; display: flex; align-items: center; padding: 0 3px; border-top: 1px solid #fff; }
.scroll svg { width: 9px; height: 9px; }
.scroll i { width: 17px; height: 15px; margin: 0 auto 0 5px; background: #cdcdcd; }
.col-help .box { padding: 3px 0 3px 2px; font-family: "Liberation Sans", "Noto Sans CJK SC", sans-serif; line-height: 17px; }
.actions { display: flex; justify-content: flex-end; gap: 34px; padding: 12px 14px 0 0; }
.actions button { width: 58px; height: 20px; background: #e1e1e1; border: 1px solid #adadad; line-height: 16px; }
.actions .primary { border: 2px solid #0a6fc8; }

.ime { position: absolute; left: 933px; top: 33px; width: 206px; height: 23px; display: flex; align-items: center; gap: 6px; padding-right: 3px; background: #fff; border: 1px solid #b4cfe8; }
.ime svg { width: 16px; height: 16px; }
.ime .ime-logo { width: 28px; height: 28px; margin: -4px 0 0 -1px; }
.poi { position: absolute; left: 1270px; top: 47px; width: 52px; box-shadow: 0 0 10px rgba(0, 0, 0, .3); }
.poi-head { height: 25px; display: flex; align-items: center; justify-content: space-between; padding-left: 3px; background: #fff; color: #999; }
.poi-head i { width: 19px; height: 20px; background: #ddd; }
.poi button { display: block; width: 100%; height: 23px; background: #efefef; border: 1px solid #666; border-width: 1px 2px 2px 1px; line-height: 18px; }
.ball { position: absolute; left: 1069px; top: -51px; width: 58px; height: 58px; border-radius: 50%; background: #2fb84a; border: 2px solid #777; box-shadow: inset 0 0 0 2px #d8f4dc, 0 2px 6px rgba(0, 0, 0, .4); }
```
